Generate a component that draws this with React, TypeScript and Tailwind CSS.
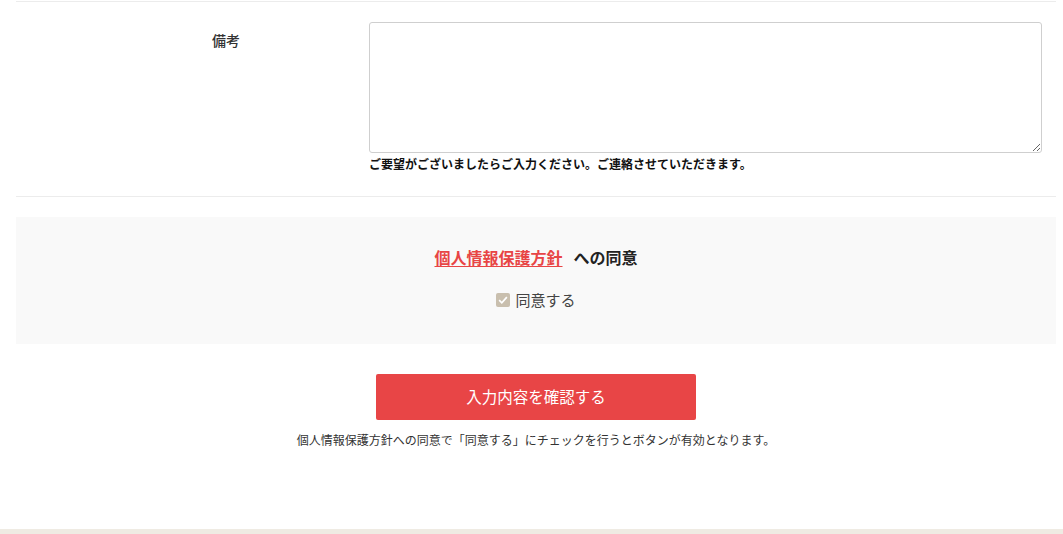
import React from "react";

const App = () => {
  return (
    <div
      className="min-h-[534px] flex flex-col bg-white text-[#333]"
      style={{ fontFamily: '"Noto Sans CJK JP", "Noto Sans", sans-serif' }}
    >
      <div className="flex-1 pt-px pl-[16px] pr-[7px]">
        {/* 備考 row */}
        <div className="flex border-t border-b border-[#ececec] pt-[20px] pb-[23px]">
          <div className="w-[353px] shrink-0 pl-[196px] pt-[8px] text-[14px] font-medium text-[#333]">
            備考
          </div>
          <div className="flex-1 pr-[14px]">
            <textarea className="block w-full h-[131px] border border-[#cfcfcf] rounded-[3px] bg-white resize-y outline-none" />
            <p className="mt-[2px] text-[12px] leading-[18px] font-semibold text-[#111]">
              ご要望がございましたらご入力ください。ご連絡させていただきます。
            </p>
          </div>
        </div>

        {/* 同意 */}
        <div className="mt-[20px] bg-[#f9f9f9] h-[127px] flex flex-col items-center pt-[28px]">
          <p className="text-[16px] leading-[24px] font-bold text-[#222]">
            <a href="#" className="text-[#e84545] underline underline-offset-2">
              個人情報保護方針
            </a>
            <span className="ml-[11px]">への同意</span>
          </p>
          <label className="mt-[21px] flex items-center gap-[5px] text-[15px] leading-[20px] text-[#444]">
            <span className="w-[14px] h-[14px] rounded-[2px] bg-[#c9bfae] flex items-center justify-center">
              <svg viewBox="0 0 14 14" className="w-[12px] h-[12px]">
                <path d="M2.5 7.2 L5.6 10.2 L11.5 3.6" fill="none" stroke="#fff" strokeWidth="2" />
              </svg>
            </span>
            同意する
          </label>
        </div>

        {/* button */}
        <div className="flex flex-col items-center mt-[30px]">
          <button className="w-[320px] h-[46px] bg-[#e84546] text-white text-[15.5px] rounded-[2px]">
            入力内容を確認する
          </button>
          <p className="mt-[11px] text-[12px] leading-[18px] text-[#333]">
            個人情報保護方針への同意で「同意する」にチェックを行うとボタンが有効となります。
          </p>
        </div>
      </div>
      <div className="h-[5px] bg-[#efebe3]" />
    </div>
  );
};

export default App;
